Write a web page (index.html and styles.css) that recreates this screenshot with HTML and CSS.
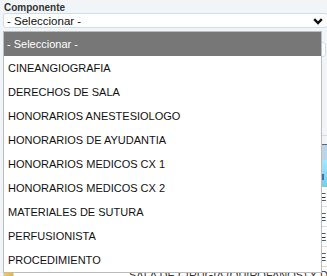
FILE: index.html
```html
<!DOCTYPE html>
<html lang="es">
<head>
  <meta charset="UTF-8">
  <title>Componente</title>
  <link rel="stylesheet" href="styles.css">
</head>
<body>
  <div class="page">
    <label class="lbl">Componente</label>
    <div class="select">
      <span>- Seleccionar -</span>
      <svg class="chev" width="10" height="7" viewBox="0 0 10 7"><polyline points="1.2,1.2 5,5 8.8,1.2" fill="none" stroke="#111" stroke-width="2.4"/></svg>
    </div>

    <div class="row2">
      <div class="col">
        <label class="lbl">Sub Componente</label>
        <div class="select"></div>
      </div>
      <div class="col side">
        <div class="input"></div>
      </div>
    </div>

    <div class="grid">
      <div class="grid-head">
        <div class="head-top"></div>
        <div class="head-bottom"><span class="sort"></span></div>
      </div>
      <div class="grid-row"><span class="c1"></span><span class="c2"></span><span class="c3">E</span></div>
      <div class="grid-row"><span class="c1"></span><span class="c2"></span><span class="c3">E</span></div>
      <div class="grid-row"><span class="c1"></span><span class="c2"></span><span class="c3">E</span></div>
      <div class="grid-row"><span class="c1"></span><span class="c2"></span><span class="c3">E</span></div>
      <div class="grid-row"><span class="c1"></span><span class="c2"><i class="doc"></i></span><span class="c3 txt">SALA DE CIRUGIA (QUIROFANOS) Y DE RECUPERACION</span></div>
    </div>
  </div>

  <ul class="dropdown">
    <li class="selected">- Seleccionar -</li>
    <li>CINEANGIOGRAFIA</li>
    <li>DERECHOS DE SALA</li>
    <li>HONORARIOS ANESTESIOLOGO</li>
    <li>HONORARIOS DE AYUDANTIA</li>
    <li>HONORARIOS MEDICOS CX 1</li>
    <li>HONORARIOS MEDICOS CX 2</li>
    <li>MATERIALES DE SUTURA</li>
    <li>PERFUSIONISTA</li>
    <li>PROCEDIMIENTO</li>
  </ul>
</body>
</html>
```

FILE: styles.css
```css
body {
  margin: 0;
  background-color: #f2f5f7;
  font-family: "Liberation Sans", Arial, sans-serif;
  color: #222;
  overflow: hidden;
}
.page {
  padding: 2px 0 0 3px;
  width: 420px;
}
.lbl {
  display: block;
  font-size: 10px;
  font-weight: bold;
  color: #333;
  height: 11px;
  line-height: 11px;
  padding-left: 1px;
}
.select {
  width: 316px;
  height: 13px;
  border: 1px solid #c8dff0;
  border-radius: 3px;
  background-color: #fff;
  display: flex;
  align-items: center;
  justify-content: space-between;
  padding: 0 4px 0 3px;
  box-sizing: content-box;
  font-size: 11.5px;
  color: #111;
}
.chev {
  margin-top: 1px;
}
.row2 {
  display: flex;
  gap: 0;
  margin-top: 2px;
}
.row2 .col .select {
  width: 314px;
  height: 13px;
  margin-top: 1px;
}
.side {
  padding-top: 10px;
  padding-left: 2px;
}
.input {
  width: 80px;
  height: 14px;
  border: 1px solid #c8dff0;
  border-radius: 3px;
  background-color: #fff;
}
.grid {
  margin-top: 78px;
  border-top: 1px solid #d6dde2;
  padding-top: 1px;
  width: 400px;
}
.grid-head {
  margin-top: 7px;
  border-top: 1px solid #5a6770;
}
.head-top {
  height: 15px;
  background-color: #b9d5e8;
}
.head-bottom {
  height: 27px;
  background: linear-gradient(#a6e6fa, #73cde9);
  position: relative;
}
.sort {
  position: absolute;
  left: 318px;
  top: 14px;
  width: 3px;
  height: 6px;
  background-color: #3d6fb8;
}
.grid-row {
  display: flex;
  height: 19px;
  border-bottom: 1px solid #d7dcdf;
  background-color: #fff;
  font-size: 11px;
  color: #333;
}
.grid-row span {
  border-right: 1px solid #d7dcdf;
  display: flex;
  align-items: center;
}
.c1 {
  width: 19px;
}
.c2 {
  width: 21px;
  justify-content: center;
}
.c3 {
  flex: 1;
  padding-left: 274px;
  border-right: none;
}
.c3.txt {
  padding-left: 115px;
  white-space: nowrap;
  align-items: flex-start;
  padding-top: 2px;
}
.doc {
  display: block;
  width: 9px;
  height: 11px;
  background: linear-gradient(135deg, #f3d56b, #e2a93b);
  margin-top: -4px;
}
.dropdown {
  position: absolute;
  top: 31px;
  left: 3px;
  width: 317px;
  margin: 0;
  padding: 0;
  list-style: none;
  background-color: #fff;
  border: 1px solid #bcbcbc;
}
.dropdown li {
  height: 24px;
  line-height: 24px;
  padding-left: 4px;
  font-size: 11px;
  color: #111;
}
.dropdown li.selected {
  background-color: #777;
  color: #fff;
  padding-left: 3px;
}
```
